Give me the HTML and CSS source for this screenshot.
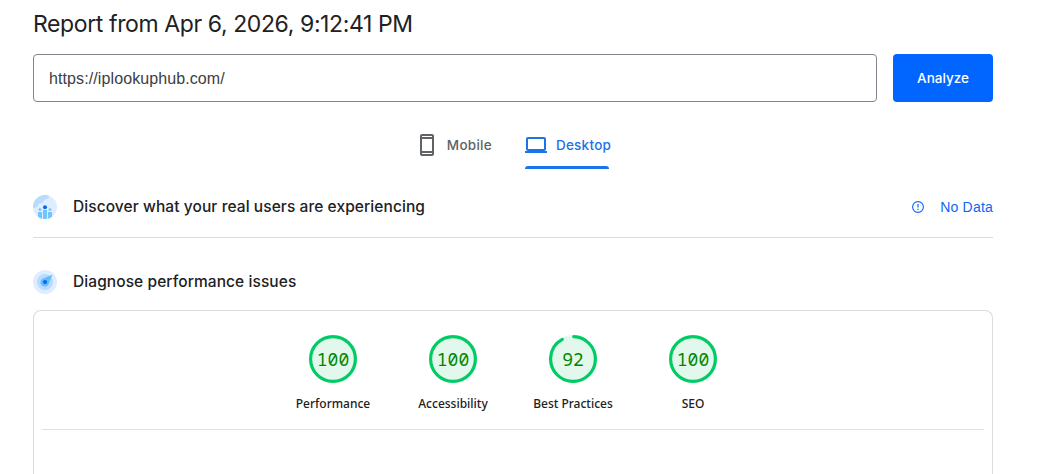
FILE: index.html
```html
<!DOCTYPE html>
<html lang="en">
<head>
  <meta charset="utf-8">
  <title>PageSpeed Insights</title>
  <link rel="stylesheet" href="styles.css">
</head>
<body>
  <main class="container">
    <h1>Report from Apr 6, 2026, 9:12:41 PM</h1>

    <form class="search-form">
      <input class="url-input" type="text" name="url" value="https://iplookuphub.com/">
      <button class="analyze-button" type="button">Analyze</button>
    </form>

    <nav class="tabs">
      <a class="tab">
        <svg class="tab-icon" viewBox="0 0 24 24" fill="currentColor"><path d="M17 1H7c-1.1 0-2 .9-2 2v18c0 1.1.9 2 2 2h10c1.1 0 2-.9 2-2V3c0-1.1-.9-2-2-2zM7 3h10v1H7V3zm10 18H7v-1h10v1zm0-3H7V6h10v12z"/></svg>
        <span>Mobile</span>
      </a>
      <a class="tab active">
        <svg class="tab-icon" viewBox="0 0 24 24" fill="currentColor"><path d="M20 18c1.1 0 2-.9 2-2V6c0-1.1-.9-2-2-2H4c-1.1 0-2 .9-2 2v10c0 1.1.9 2 2 2H1v2h22v-2h-3zM4 6h16v10H4V6z"/></svg>
        <span>Desktop</span>
      </a>
    </nav>

    <section class="section-head field-head">
      <svg class="section-icon" viewBox="0 0 24 24">
        <defs><clipPath id="disc"><circle cx="12" cy="12" r="12"/></clipPath></defs>
        <g clip-path="url(#disc)">
          <path fill="#deedff" d="M0 0h24v24H0z"/>
          <path fill="#b8dbff" d="M0 0h16c0 3-1 4-3 4s-2 3-4 4-3-1-4 2-3 3-5 3z"/>
          <path fill="#72c5fc" d="M5 17h4v7H5zM10 15h4v9h-4zM15 17h4v7h-4z"/>
          <circle cx="7" cy="14.6" r="1.4" fill="#72c5fc"/>
          <circle cx="17" cy="14.6" r="1.4" fill="#72c5fc"/>
          <circle cx="12" cy="12.2" r="2" fill="#0b66f5"/>
        </g>
      </svg>
      <h2>Discover what your real users are experiencing</h2>
      <div class="no-data">
        <svg class="info-icon" viewBox="0 0 12 12" fill="none" stroke="currentColor"><circle cx="6" cy="6" r="5.4" stroke-width="1.1"/><path stroke-width="1.2" d="M6 3v3.6M6 7.8V9"/></svg>
        <span>No Data</span>
      </div>
    </section>

    <section class="section-head lab-head">
      <svg class="section-icon" viewBox="0 0 24 24">
        <circle cx="12" cy="12" r="12" fill="#deedff"/>
        <circle cx="12" cy="12" r="8" fill="#b8dbff"/>
        <path fill="#62bdfb" d="M19.4 4.8 15.7 14a4.3 4.3 0 1 1-5.8-5.6z"/>
        <circle cx="12" cy="12" r="2.1" fill="#0b66f5"/>
      </svg>
      <h2>Diagnose performance issues</h2>
    </section>

    <div class="report">
      <div class="scores">
        <div class="gauge">
          <div class="gauge-ring">
            <svg viewBox="0 0 120 120"><circle class="gauge-base" cx="60" cy="60" r="56"/><circle class="gauge-arc" cx="60" cy="60" r="56"/></svg>
            <span class="gauge-value">100</span>
          </div>
          <span class="gauge-label">Performance</span>
        </div>
        <div class="gauge">
          <div class="gauge-ring">
            <svg viewBox="0 0 120 120"><circle class="gauge-base" cx="60" cy="60" r="56"/><circle class="gauge-arc" cx="60" cy="60" r="56"/></svg>
            <span class="gauge-value">100</span>
          </div>
          <span class="gauge-label">Accessibility</span>
        </div>
        <div class="gauge">
          <div class="gauge-ring">
            <svg viewBox="0 0 120 120"><circle class="gauge-base" cx="60" cy="60" r="56"/><circle class="gauge-arc" cx="60" cy="60" r="56" transform="rotate(-88 60 60)" stroke-dasharray="319.7 352"/></svg>
            <span class="gauge-value">92</span>
          </div>
          <span class="gauge-label">Best Practices</span>
        </div>
        <div class="gauge">
          <div class="gauge-ring">
            <svg viewBox="0 0 120 120"><circle class="gauge-base" cx="60" cy="60" r="56"/><circle class="gauge-arc" cx="60" cy="60" r="56"/></svg>
            <span class="gauge-value">100</span>
          </div>
          <span class="gauge-label">SEO</span>
        </div>
      </div>
    </div>
  </main>
</body>
</html>
```
FILE: styles.css
```css
* {
  box-sizing: border-box;
}

body {
  margin: 0;
  background-color: #fff;
  color: #202124;
  font-family: "Google Sans", Inter, sans-serif;
}

.container {
  width: 960px;
  height: 474px;
  margin-left: 33px;
}

h1, h2 {
  margin: 0;
  white-space: nowrap;
}

h1 {
  height: 54px;
  padding-top: 8px;
  font-size: 23px;
  font-weight: 400;
  line-height: 32px;
  letter-spacing: -0.39px;
}

.search-form {
  display: flex;
  gap: 16px;
}

.url-input {
  flex: 1;
  height: 48px;
  padding: 2px 15px 0;
  border: 1px solid #80868b;
  border-radius: 4px;
  color: #3c4043;
  font-family: "Liberation Sans", Arial, sans-serif;
  font-size: 16px;
  letter-spacing: 0.1px;
}

.analyze-button {
  width: 100px;
  height: 48px;
  padding: 0;
  border: none;
  border-radius: 4px;
  background-color: #06f;
  color: #fff;
  font-family: inherit;
  font-size: 13.5px;
  font-weight: 500;
}

.tabs {
  display: flex;
  justify-content: center;
  gap: 32px;
  height: 67px;
  padding-top: 31px;
}

.tab {
  display: grid;
  grid-template-columns: 24px auto;
  grid-template-rows: 24px 3px;
  align-items: center;
  align-content: start;
  gap: 9px 8px;
  color: #5f6368;
  font-size: 13.5px;
  font-weight: 500;
  letter-spacing: 0.25px;
}

.tab-icon {
  width: 24px;
  height: 24px;
}

.active {
  color: #1a73e8;
}

.active::after {
  content: '';
  grid-column: 1 / 3;
  height: 3px;
  margin: 0 2px 0 1px;
  border-radius: 3px 3px 0 0;
  background-color: #1a73e8;
}

.section-head {
  display: flex;
  align-items: center;
  gap: 16px;
}

.section-icon {
  width: 24px;
  height: 24px;
}

.section-head h2 {
  font-size: 15.5px;
  font-weight: 500;
  line-height: 24px;
  letter-spacing: 0.08px;
}

.field-head {
  height: 69px;
  padding-top: 8px;
  border-bottom: 1px solid #dadce0;
}

.lab-head {
  height: 72px;
  padding-top: 16px;
}

.no-data {
  display: flex;
  align-items: center;
  gap: 16px;
  margin-left: auto;
  color: #0b66f5;
  font-family: "Liberation Sans", Arial, sans-serif;
  font-size: 14px;
  letter-spacing: 0.2px;
}

.info-icon {
  width: 12px;
  height: 12px;
}

.report {
  height: 164px;
  padding: 0 8px;
  border: 1px solid #dadce0;
  border-bottom: none;
  border-radius: 8px 8px 0 0;
}

.scores {
  display: flex;
  justify-content: center;
  height: 119px;
  padding-top: 24px;
  border-bottom: 1px solid #e0e0e0;
}

.gauge {
  display: flex;
  flex-direction: column;
  align-items: center;
  width: 120px;
}

.gauge-ring {
  display: grid;
  width: 48px;
  height: 48px;
}

.gauge-ring > * {
  grid-area: 1 / 1;
}

.gauge-base {
  fill: #e3f8ec;
  stroke: #e3f8ec;
  stroke-width: 8;
}

.gauge-arc {
  fill: none;
  stroke: #0c6;
  stroke-width: 8;
  stroke-linecap: round;
}

.gauge-value {
  place-self: center;
  color: #080;
  font-family: "Noto Sans Mono", "DejaVu Sans Mono", monospace;
  font-size: 18px;
  line-height: 24px;
}

.gauge-label {
  margin-top: 12px;
  color: #212121;
  font-family: "Noto Sans", sans-serif;
  font-size: 12px;
  font-weight: 500;
  line-height: 18px;
}
```
